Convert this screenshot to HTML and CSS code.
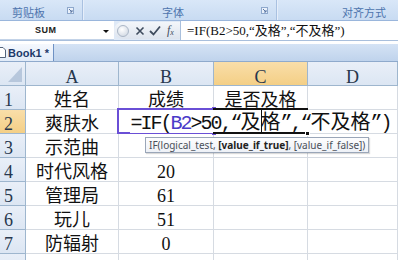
FILE: index.html
```html
<!DOCTYPE html>
<html>
<head>
<meta charset="utf-8">
<link rel="stylesheet" href="styles.css">
</head>
<body>
<div class="app">
  <div class="ribbon">
    <div class="grp g1"><span class="glabel">剪贴板</span><svg class="launch" width="7" height="7" viewBox="0 0 7 7"><rect x="0.5" y="0.5" width="6" height="6" fill="#e9f0fa" stroke="#8ea8cc"/><path d="M2 2 L5 5 M5 3 V5 H3" stroke="#5b77a3" fill="none"/></svg></div>
    <div class="grp g2"><span class="glabel">字体</span><svg class="launch" width="7" height="7" viewBox="0 0 7 7"><rect x="0.5" y="0.5" width="6" height="6" fill="#e9f0fa" stroke="#8ea8cc"/><path d="M2 2 L5 5 M5 3 V5 H3" stroke="#5b77a3" fill="none"/></svg></div>
    <div class="grp g3"><span class="glabel">对齐方式</span></div>
  </div>
  <div class="fbar">
    <div class="namebox"><span class="nm">SUM</span><span class="dd"></span></div>
    <div class="btns">
      <span class="knob"></span>
      <svg class="ico" width="10" height="10" viewBox="0 0 10 10"><path d="M1.5 1.5 L8.5 8.5 M8.5 1.5 L1.5 8.5" stroke="#3f4c5e" stroke-width="1.6"/></svg>
      <svg class="ico" width="12" height="11" viewBox="0 0 12 11"><path d="M1 6 L4.5 9.5 L11 1.5" stroke="#3f4c5e" stroke-width="1.8" fill="none"/></svg>
      <span class="fx">f<sub>x</sub></span>
    </div>
    <div class="finput">=IF(B2&gt;50,“及格”,“不及格”)</div>
  </div>
  <div class="tabs">
    <div class="tab"><svg class="page" width="6" height="11" viewBox="0 0 6 11"><path d="M-2 0.5 H3 L5.5 3 V10.5 H-2" fill="#fff" stroke="#53637a"/></svg><span>Book1 *</span></div>
  </div>
  <div class="sheet">
    <div class="hd corner"><svg width="26" height="23" viewBox="0 0 26 23"><path d="M22 5 V20 H8 Z" fill="#b7c7dc"/></svg></div>
    <div class="hd">A</div><div class="hd">B</div><div class="hd sel">C</div><div class="hd">D</div>

    <div class="rh">1</div><div class="c">姓名</div><div class="c">成绩</div><div class="c">是否及格</div><div class="c"></div>
    <div class="rh sel">2</div><div class="c">爽肤水</div><div class="c"></div>
    <div class="c edit"><span class="editor"><span class="a">=IF(</span><span class="a ref">B2</span><span class="a">&gt;50,“</span><span class="w">及</span><span class="caret"></span><span class="w">格</span><span class="a">”,“</span><span class="w">不及格</span><span class="a">”)</span></span></div>
    <div class="c"></div>
    <div class="rh">3</div><div class="c">示范曲</div><div class="c"></div><div class="c"></div><div class="c"></div>
    <div class="rh">4</div><div class="c">时代风格</div><div class="c">20</div><div class="c"></div><div class="c"></div>
    <div class="rh">5</div><div class="c">管理局</div><div class="c">61</div><div class="c"></div><div class="c"></div>
    <div class="rh">6</div><div class="c">玩儿</div><div class="c">51</div><div class="c"></div><div class="c"></div>
    <div class="rh">7</div><div class="c">防辐射</div><div class="c">0</div><div class="c"></div><div class="c"></div>
    <div class="rh"></div><div class="c"></div><div class="c"></div><div class="c"></div><div class="c"></div>

    <div class="refbox"><span class="hnd tr"></span><span class="hnd br"></span></div>
    <div class="act-top"></div>
    <div class="act-bot"><span class="fill"></span></div>
    <div class="tip">IF(logical_test, <b>[value_if_true]</b>, [value_if_false])</div>
  </div>
</div>
</body>
</html>
```

FILE: styles.css
```css
* { box-sizing: border-box; }
html, body { margin: 0; padding: 0; background: #fff; }
.app { width: 398px; height: 260px; overflow: hidden; position: relative; }

/* ribbon group labels */
.ribbon {
  display: flex;
  height: 21px;
  background: linear-gradient(#d9e7f8, #c8dbf2);
  border-bottom: 1px solid #9ab6dc;
}
.grp {
  display: flex;
  align-items: center;
  border-right: 1px solid #a9c1e1;
  box-shadow: 1px 0 0 #e6eefa;
  height: 20px;
}
.g1 { width: 83px; padding-left: 12px; }
.g2 { width: 194px; padding-left: 79px; }
.g3 { flex: 1; padding-left: 65px; border-right: none; box-shadow: none; }
.glabel {
  font-family: "Noto Sans CJK SC", sans-serif;
  font-size: 11px;
  line-height: 14px;
  color: #4d74ad;
  padding-top: 3px;
}
.launch { margin-left: auto; margin-right: 8px; align-self: flex-start; margin-top: 7px; }

/* formula bar */
.fbar {
  display: flex;
  height: 20px;
  background: #dfe9f6;
  border-bottom: 1px solid #a9bfdc;
}
.namebox {
  width: 114px;
  background: #fff;
  display: flex;
  align-items: center;
  padding-left: 35px;
  border-bottom: 1px solid #c3d3e8;
}
.nm {
  font-family: "Liberation Sans", sans-serif;
  font-size: 9px;
  font-weight: bold;
  color: #222;
  letter-spacing: 0.5px;
}
.dd {
  margin-left: auto;
  margin-right: 5px;
  width: 0; height: 0;
  border-left: 3px solid transparent;
  border-right: 3px solid transparent;
  border-top: 3px solid #111;
  margin-top: 2px;
}
.btns {
  width: 66px;
  display: flex;
  align-items: center;
  padding-left: 3px;
  background: linear-gradient(#f3f6fa, #dde4ee);
  border-radius: 9px 0 0 9px;
  margin: 1px 0;
}
.knob {
  width: 12px; height: 12px;
  border-radius: 50%;
  background: radial-gradient(circle at 40% 35%, #ffffff, #c9d2de);
  border: 1px solid #aab6c6;
  margin-right: 6px;
}
.ico { margin-right: 4px; }
.fx {
  font-family: "Liberation Serif", serif;
  font-style: italic;
  font-size: 12px;
  color: #3f4c5e;
  margin-left: 2px;
}
.fx sub { font-size: 8px; vertical-align: -1px; }
.finput {
  flex: 1;
  background: #fff;
  border-left: 1px solid #a9bfdc;
  padding-left: 6px;
  font-family: "Liberation Serif", "Noto Sans CJK SC", serif;
  font-size: 13px;
  line-height: 19px;
  color: #111;
  white-space: nowrap;
  overflow: hidden;
}

/* workbook tabs */
.tabs {
  margin-top: 3px;
  height: 18px;
  display: flex;
  background: linear-gradient(#d5e3f5, #bfd3ec);
  border-bottom: 1px solid #8faacc;
}
.tab {
  width: 54px;
  display: flex;
  align-items: center;
  gap: 2px;
  background: linear-gradient(#f5f8fd, #e1ebf8);
  border-right: 1px solid #6f92c4;
  font-family: "Liberation Sans", sans-serif;
  font-size: 11px;
  font-weight: bold;
  color: #1d3a6a;
}

/* sheet grid */
.sheet {
  position: relative;
  display: grid;
  grid-template-columns: 26px 93px 95px 94px 1fr;
  grid-template-rows: 24px repeat(8, 24px);
  font-family: "Liberation Serif", "Noto Sans CJK SC", serif;
  font-size: 18px;
  line-height: 16px;
  color: #111;
}
.hd, .rh {
  background: linear-gradient(#e9eff8, #dce6f3);
  border-right: 1px solid #9eb6ce;
  border-bottom: 1px solid #9eb6ce;
  color: #27374d;
  padding-top: 7px;
  text-align: center;
}
.rh { text-align: left; padding-left: 4px; padding-top: 6px; }
.hd.sel, .rh.sel { background: linear-gradient(#f9dea9, #f4cf86); }
.corner { padding: 0; }
.corner svg { display: block; }
.c {
  border-right: 1px solid #d6dbe2;
  border-bottom: 1px solid #d6dbe2;
  padding-top: 6px;
  text-align: center;
  white-space: nowrap;
}
.c.edit {
  display: flex;
  justify-content: center;
  padding-top: 0;
}
.editor {
  position: relative;
  z-index: 2;
  background: #fff;
  display: flex;
  align-items: baseline;
  height: 23px;
  padding-top: 2px;
  font-size: 20px;
  line-height: 20px;
  flex-shrink: 0;
  white-space: nowrap;
}
.a {
  font-family: "Liberation Mono", monospace;
  font-size: 20px;
  letter-spacing: -2px;
}
.w {
  font-family: "Liberation Serif", "Noto Sans CJK SC", serif;
  font-size: 20px;
}
.ref { color: #4a3bc9; }
.caret {
  display: inline-block;
  width: 1px;
  height: 24px;
  background: #111;
  align-self: flex-start;
  margin-top: -2px;
  margin-right: -1px;
}

/* overlays */
.refbox {
  position: absolute;
  left: 117px; top: 46px;
  width: 98px; height: 26px;
  border: 2px solid #6a4fd6;
  z-index: 1;
}
.hnd {
  position: absolute;
  width: 4px; height: 4px;
  background: #f1e7a3;
  border: 1px solid #6a4fd6;
}
.hnd.tr { right: -3px; top: -3px; }
.hnd.br { right: -3px; bottom: -3px; }
.act-top, .act-bot {
  position: absolute;
  left: 213px;
  width: 95px;
  height: 2px;
  background: #111;
  z-index: 3;
}
.act-top { top: 46px; }
.act-bot { top: 70px; }
.fill {
  position: absolute;
  right: -2px; top: -1px;
  width: 5px; height: 5px;
  background: #111;
  border: 1px solid #fff;
}
.tip {
  position: absolute;
  left: 145px; top: 75px;
  height: 16px;
  padding: 0 3px;
  z-index: 4;
  background: linear-gradient(#fdfdfe, #eef1f7);
  border: 1px solid #9aa6b8;
  box-shadow: 1px 1px 1px rgba(0,0,0,0.15);
  font-family: "Noto Sans", "Liberation Sans", sans-serif;
  font-size: 10px;
  line-height: 14px;
  color: #4a4f58;
  white-space: nowrap;
}
.tip b { color: #222; }
```
